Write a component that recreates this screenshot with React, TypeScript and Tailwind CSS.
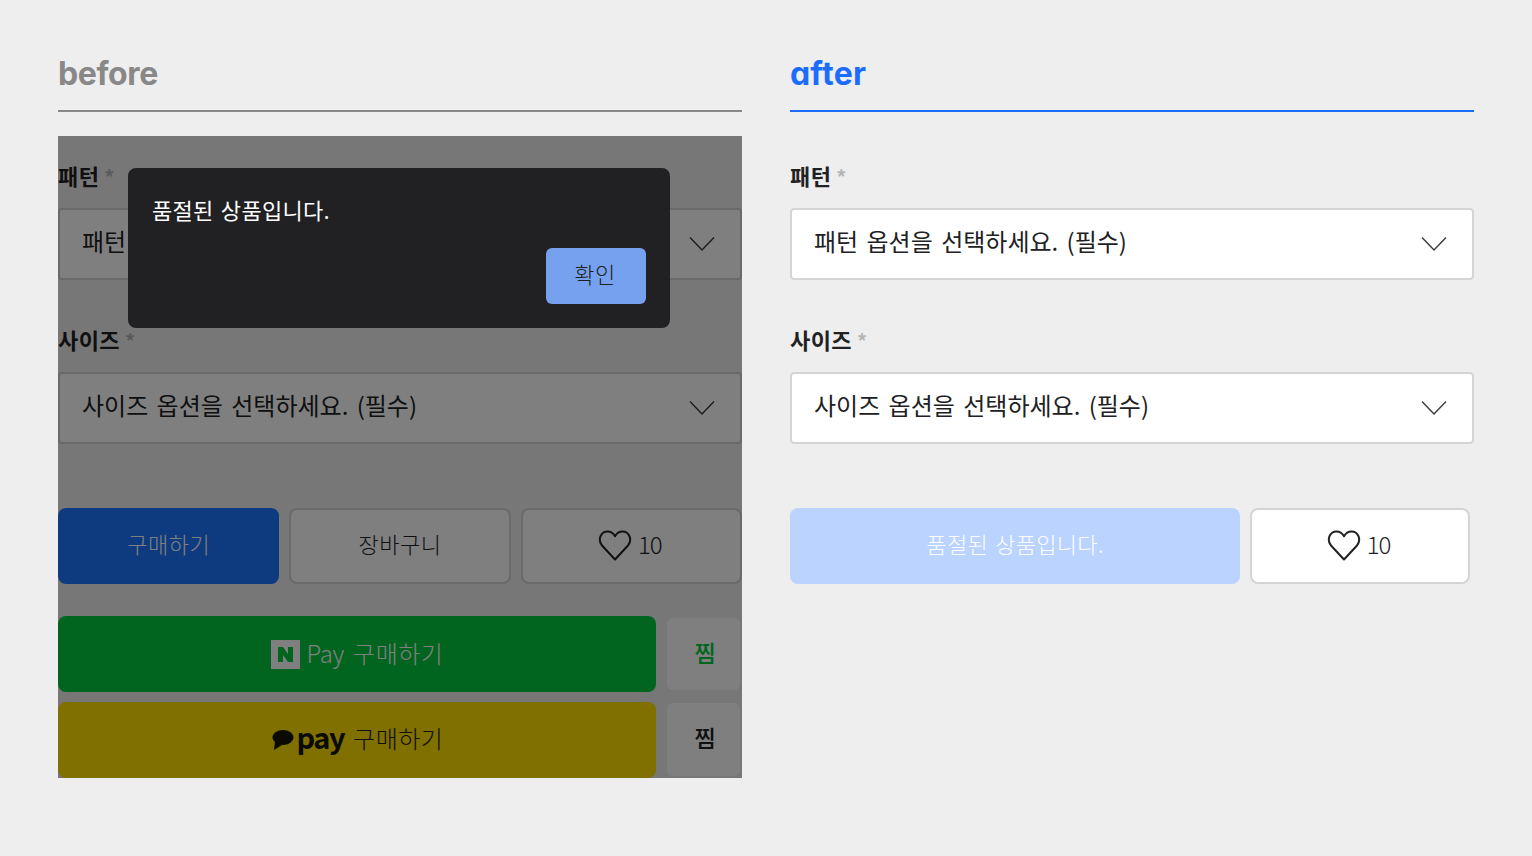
const korean = "font-['Noto_Sans_CJK_KR','Noto_Sans',sans-serif]";

const Chevron = () => (
  <svg width="26" height="16" viewBox="0 0 26 16" fill="none" className="shrink-0">
    <path d="M1 1.5 13 14 25 1.5" stroke="#3a3a3a" strokeWidth="1.4" />
  </svg>
);

const HeartIcon = () => (
  <svg width="34" height="32" viewBox="0 0 34 32" fill="none" className="shrink-0">
    <path
      d="M17 29.500 4 15.500C-.5 10 2.500 1.500 9.500 1.500c3.300 0 5.800 1.800 7.500 4.700 1.700-2.900 4.200-4.700 7.500-4.700 7 0 10 8.500 5.500 14Z"
      stroke="#212123"
      strokeWidth="2"
      strokeLinejoin="round"
    />
  </svg>
);

const Field = ({ label, placeholder, first }: { label: string; placeholder: string; first?: boolean }) => (
  <div className={first ? "" : "mt-[44px]"}>
    <div className="mb-[16px] flex h-[32px] items-center pb-[1px]">
      <span className="text-[22px] font-bold tracking-[0.4px] text-[#212123]">{label}</span>
      <span className="ml-[5px] mt-[2px] text-[20px] font-bold leading-none text-[#b4b4b4]">*</span>
    </div>
    <div className="flex h-[72px] items-center justify-between rounded-[4px] border-2 border-[#d5d5d5] bg-white pl-[22px] pr-[25px]">
      <span className="pb-[6px] text-[24px] [word-spacing:3px] text-[#212123]">{placeholder}</span>
      <Chevron />
    </div>
  </div>
);

const WishButton = ({ className }: { className: string }) => (
  <button className={`flex h-[76px] items-center justify-center gap-[6px] rounded-[8px] border-2 border-[#d5d5d5] bg-white pr-[3px] ${className}`}>
    <HeartIcon />
    <span className="pb-[5px] text-[24px] font-light tracking-[-1px] text-[#212123]">10</span>
  </button>
);

const ZzimButton = ({ color, className }: { color: string; className: string }) => (
  <button className={`mr-[2px] flex w-[73px] items-center justify-center rounded-[6px] bg-white pb-[4px] pl-[3px] text-[23px] font-medium ${color} ${className}`}>
    찜
  </button>
);

const BeforeForm = () => (
  <div>
    <Field first label="패턴" placeholder="패턴 옵션을 선택하세요. (필수)" />
    <Field label="사이즈" placeholder="사이즈 옵션을 선택하세요. (필수)" />
    <div className="mt-[64px] grid grid-cols-3 gap-[10px]">
      <button className="flex h-[76px] items-center justify-center rounded-[8px] bg-[#1c74ff] pb-[5px] text-[22px] font-light tracking-[0.5px] text-white">
        구매하기
      </button>
      <button className="flex h-[76px] items-center justify-center rounded-[8px] border-2 border-[#d5d5d5] bg-white pb-[5px] text-[22px] font-light tracking-[0.5px] text-[#212123]">
        장바구니
      </button>
      <WishButton className="" />
    </div>
    <div className="mt-[32px] flex justify-between">
      <button className="flex h-[76px] w-[598px] items-center justify-center rounded-[8px] bg-[#02ca3e] text-[24px] font-light text-white">
        <svg width="29" height="29" viewBox="0 0 29 29" className="mr-[7px] shrink-0">
          <rect width="29" height="29" fill="#fff" />
          <path d="M7 7h5l5 7V7h5v15h-5l-5-7v7H7Z" fill="#02ca3e" />
        </svg>
        <span className="pb-[3px] tracking-[-0.3px]">Pay</span>
        <span className="ml-[9px] pb-[3px] tracking-[0.5px]">구매하기</span>
      </button>
      <ZzimButton color="text-[#02ca3e]" className="my-[2px] h-[72px]" />
    </div>
    <div className="mt-[10px] flex justify-between">
      <button className="flex h-[76px] w-[598px] items-center justify-center rounded-[8px] bg-[#ffe000] pl-[1px] text-[24px] font-light text-[#212123]">
        <svg width="22" height="20" viewBox="0 0 22 20" className="mr-[3px] shrink-0">
          <ellipse cx="11" cy="7.500" rx="10.500" ry="7.500" fill="#141400" />
          <path d="M3 11 2 20 10 15Z" fill="#141400" />
        </svg>
        <span className="mr-[9px] pb-[6px] text-[29px] font-bold tracking-[-1.500px] text-[#141400]">pay</span>
        <span className="pb-[4px] tracking-[0.5px]">구매하기</span>
      </button>
      <ZzimButton color="text-[#212123]" className="mt-[1px] h-[73px]" />
    </div>
  </div>
);

const AfterForm = () => (
  <div>
    <Field first label="패턴" placeholder="패턴 옵션을 선택하세요. (필수)" />
    <Field label="사이즈" placeholder="사이즈 옵션을 선택하세요. (필수)" />
    <div className="mt-[64px] flex gap-[10px]">
      <button className="flex h-[76px] w-[450px] items-center justify-center rounded-[8px] bg-[#bad3ff] pb-[5px] text-[22px] font-light tracking-[0.3px] [word-spacing:2px] text-white">
        품절된 상품입니다.
      </button>
      <WishButton className="w-[220px]" />
    </div>
  </div>
);

const Heading = ({ children, color }: { children: string; color: string }) => (
  <h2 className={`flex h-[56px] items-start border-b-2 font-['Inter',sans-serif] text-[32px] font-bold leading-[36px] [font-feature-settings:'cv11'] ${color}`}>
    {children}
  </h2>
);

export default function App() {
  return (
    <div className={`min-h-[856px] bg-[#eeeeee] px-[58px] pt-[56px] ${korean}`}>
      <div className="grid grid-cols-2 gap-[48px]">
        <section>
          <Heading color="border-[#888888] tracking-[-0.4px] text-[#888888]">before</Heading>
          <div className="relative mt-[24px] h-[642px] overflow-hidden pt-[24px]">
            <BeforeForm />
            <div className="absolute inset-0 bg-black/50" />
            <div className="absolute left-[70px] top-[32px] flex h-[160px] w-[542px] flex-col justify-between rounded-[8px] bg-[#212123] p-[24px]">
              <p className="text-[22px] leading-[34px] tracking-[0.3px] [word-spacing:2px] text-white">품절된 상품입니다.</p>
              <button className="flex h-[56px] w-[100px] items-center justify-center self-end rounded-[6px] bg-[#76a1ee] pb-[5px] pr-[2px] text-[22px] font-light tracking-[0.4px] text-[#212123]">
                확인
              </button>
            </div>
          </div>
        </section>
        <section>
          <Heading color="border-[#1c6dff] tracking-[0.2px] text-[#1c6dff]">after</Heading>
          <div className="mt-[24px] pt-[24px]">
            <AfterForm />
          </div>
        </section>
      </div>
    </div>
  );
}
